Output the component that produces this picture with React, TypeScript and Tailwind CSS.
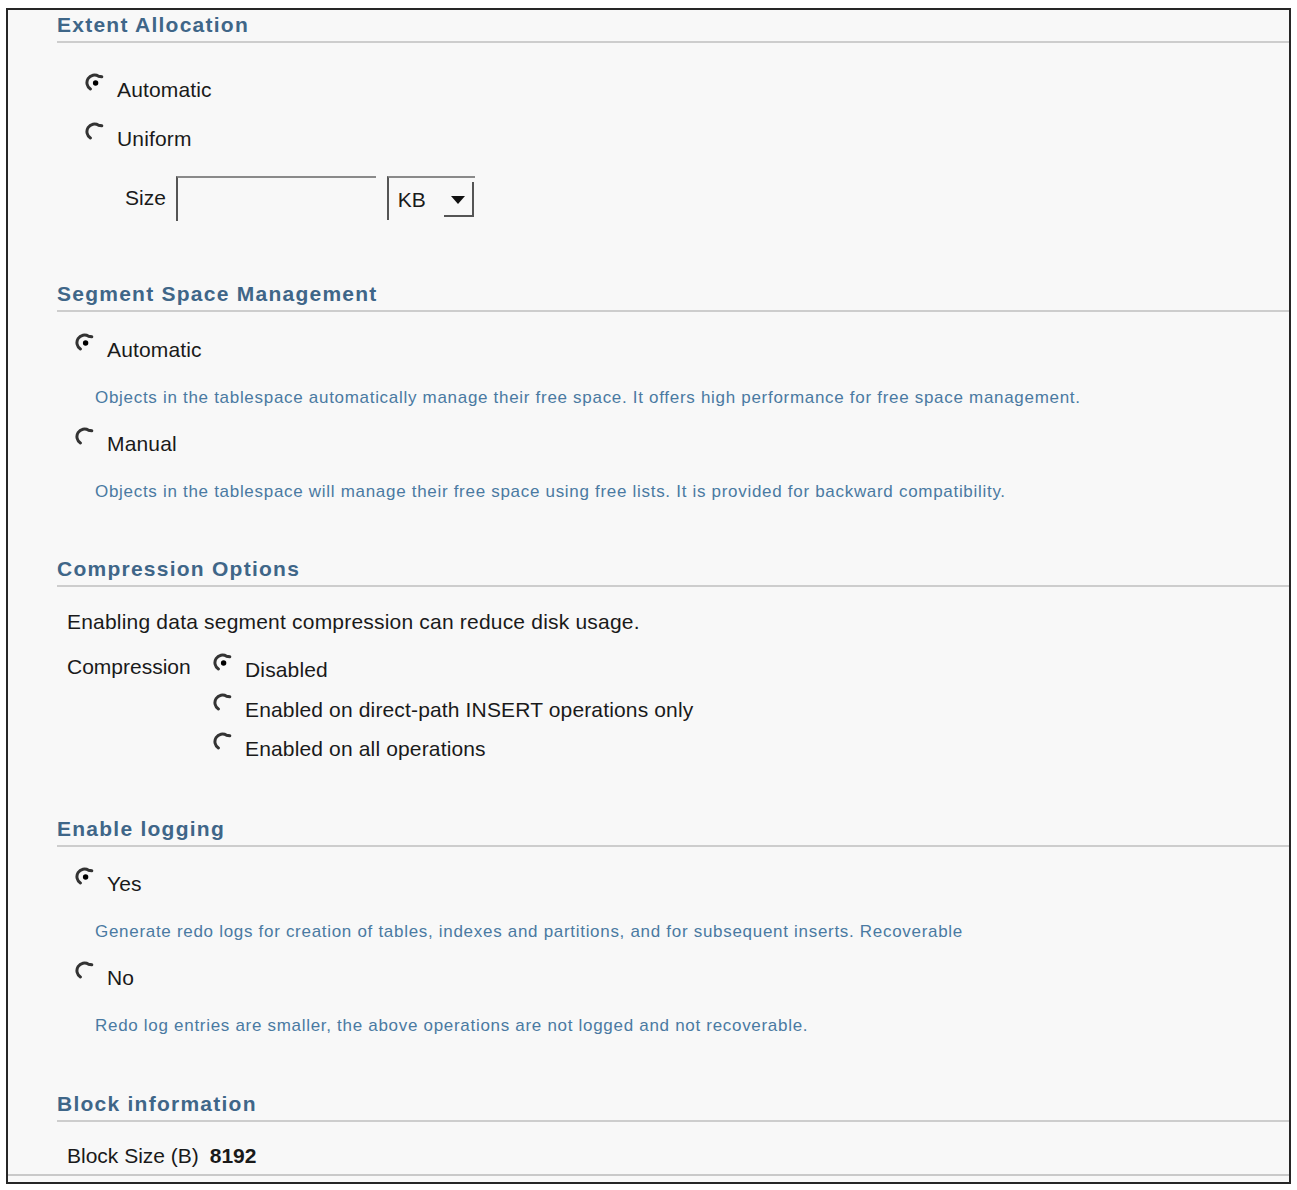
import React from "react";

const Radio = ({ checked }: { checked?: boolean }) => (
  <svg width="20" height="20" viewBox="0 0 20 20" className="shrink-0 -mt-[5px]">
    <path
      d="M5.4 16 A7.5 7.5 0 0 1 13.6 3.3 L16.8 3.8"
      fill="none"
      stroke="#333"
      strokeWidth="3"
      strokeLinecap="round"
    />
    {checked && <circle cx="10.6" cy="10" r="2.7" fill="#000" />}
  </svg>
);

const Heading = ({ children, className = "" }: { children: React.ReactNode; className?: string }) => (
  <div className={`ml-[49px] pb-[4px] border-b-2 border-[#cdcdcd] ${className}`}>
    <div className="text-[21px] leading-[24px] font-bold tracking-[1.25px] text-[#3f6688]">{children}</div>
  </div>
);

const RadioRow = ({ checked, label, className = "" }: { checked?: boolean; label: string; className?: string }) => (
  <div className={`flex items-start gap-[12px] h-[24px] ${className}`}>
    <Radio checked={checked} />
    <span className="text-[21px] leading-[24px] tracking-[0.15px] text-[#1a1a1a]">{label}</span>
  </div>
);

const Desc = ({ children, className = "" }: { children: React.ReactNode; className?: string }) => (
  <div className={`text-[17px] leading-[20px] tracking-[0.7px] text-[#4a7aa2] ${className}`}>{children}</div>
);

export default function App() {
  return (
    <div
      className="w-[1297px] h-[1190px] bg-white pt-[8px] pl-[6px]"
      style={{ fontFamily: '"Liberation Sans", Arial, sans-serif' }}
    >
      <div className="w-[1285px] h-[1176px] border-2 border-[#262626] bg-[#f8f8f8] flex flex-col">
        {/* Extent Allocation */}
        <Heading className="mt-[3px]">Extent Allocation</Heading>
        <div className="ml-[77px]">
          <RadioRow checked label="Automatic" className="mt-[35px]" />
          <RadioRow label="Uniform" className="mt-[25px]" />
        </div>
        <div className="ml-[117px] mt-[24px] flex items-center h-[46px]">
          <span className="text-[21px] leading-[24px] text-[#1a1a1a]">Size</span>
          <div className="ml-[10px] w-[200px] h-[45px] border-l-2 border-t-2 border-l-[#555] border-t-[#8a8a8a] bg-[#f8f8f8]" />
          <div className="ml-[11px] w-[88px] h-[44px] border-l-2 border-t-2 border-l-[#555] border-t-[#8a8a8a] flex items-start">
            <span className="ml-[9px] mt-[10px] text-[21px] leading-[24px] text-[#1a1a1a]">KB</span>
            <div className="ml-auto mr-[1px] mt-[4px] w-[30px] h-[35px] border-r-2 border-b-2 border-[#555] flex items-start justify-center pt-[14px]">
              <svg width="14" height="8" viewBox="0 0 14 8">
                <polygon points="0,0 14,0 7,8" fill="#111" />
              </svg>
            </div>
          </div>
        </div>

        {/* Segment Space Management */}
        <Heading className="mt-[61px]">Segment Space Management</Heading>
        <div className="ml-[67px]">
          <RadioRow checked label="Automatic" className="mt-[26px]" />
        </div>
        <Desc className="ml-[87px] mt-[26px]">
          Objects in the tablespace automatically manage their free space. It offers high performance for free space management.
        </Desc>
        <div className="ml-[67px]">
          <RadioRow label="Manual" className="mt-[24px]" />
        </div>
        <Desc className="ml-[87px] mt-[26px]">
          Objects in the tablespace will manage their free space using free lists. It is provided for backward compatibility.
        </Desc>

        {/* Compression Options */}
        <Heading className="mt-[55px]">Compression Options</Heading>
        <div className="ml-[59px] mt-[23px] text-[21px] leading-[24px] tracking-[0.2px] text-[#1a1a1a]">
          Enabling data segment compression can reduce disk usage.
        </div>
        <div className="ml-[59px] mt-[24px] flex items-start">
          <span className="w-[146px] -mt-[3px] text-[21px] leading-[24px] text-[#1a1a1a]">Compression</span>
          <div className="flex flex-col gap-[16px]">
            <RadioRow checked label="Disabled" />
            <RadioRow label="Enabled on direct-path INSERT operations only" />
            <RadioRow label="Enabled on all operations" className="-mt-[1px]" />
          </div>
        </div>

        {/* Enable logging */}
        <Heading className="mt-[56px]">Enable logging</Heading>
        <div className="ml-[67px]">
          <RadioRow checked label="Yes" className="mt-[25px]" />
        </div>
        <Desc className="ml-[87px] mt-[26px]">
          Generate redo logs for creation of tables, indexes and partitions, and for subsequent inserts. Recoverable
        </Desc>
        <div className="ml-[67px]">
          <RadioRow label="No" className="mt-[24px]" />
        </div>
        <Desc className="ml-[87px] mt-[26px]">
          Redo log entries are smaller, the above operations are not logged and not recoverable.
        </Desc>

        {/* Block information */}
        <Heading className="mt-[56px]">Block information</Heading>
        <div className="ml-[59px] mt-[22px] text-[21px] leading-[24px] text-[#1a1a1a]">
          Block Size (B) <span className="ml-[5px] font-bold">8192</span>
        </div>
        <div className="mt-[6px] border-b-2 border-[#c9c9c9]" />
      </div>
    </div>
  );
}
